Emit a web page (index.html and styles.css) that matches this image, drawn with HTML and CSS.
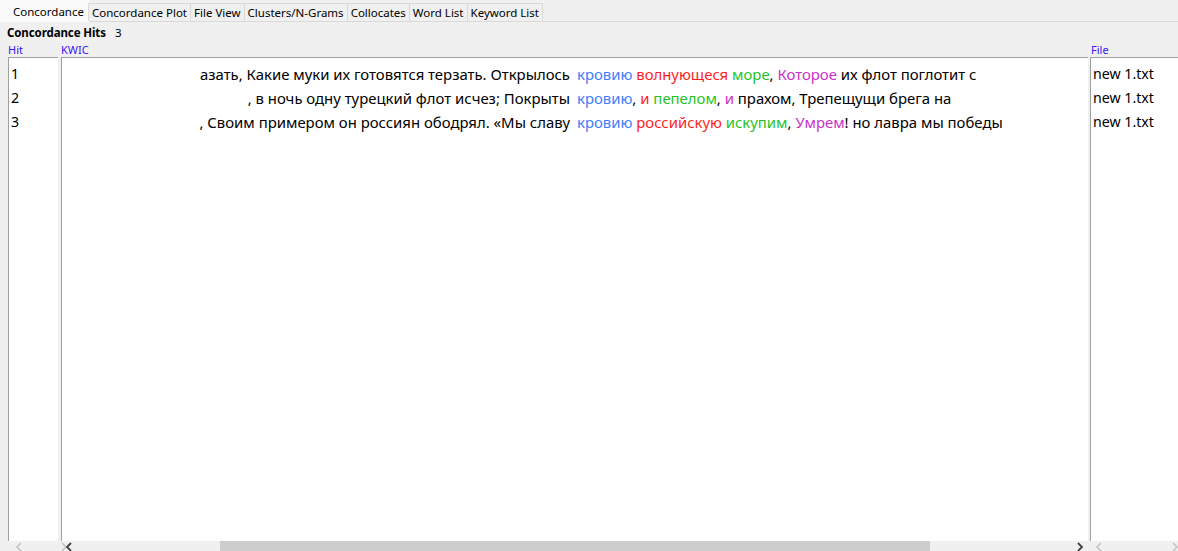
FILE: index.html
```html
<!DOCTYPE html>
<html>
<head>
<meta charset="utf-8">
<link rel="stylesheet" href="styles.css">
</head>
<body>
<div class="tabs">
  <div class="tab active">Concordance</div>
  <div class="tab">Concordance Plot</div>
  <div class="tab">File View</div>
  <div class="tab">Clusters/N-Grams</div>
  <div class="tab">Collocates</div>
  <div class="tab">Word List</div>
  <div class="tab">Keyword List</div>
</div>
<div class="hits"><b>Concordance Hits</b><span class="count">3</span></div>
<div class="grid">
  <div class="col col-hit">
    <div class="label">Hit</div>
    <div class="panel">
      <div class="row">1</div>
      <div class="row">2</div>
      <div class="row">3</div>
    </div>
    <div class="sbar">
      <svg class="arr dis" width="8" height="10" viewBox="0 0 8 10"><path d="M6 1 L2 5 L6 9" fill="none" stroke="currentColor" stroke-width="1.6"/></svg>
      <svg class="arr dis" width="8" height="10" viewBox="0 0 8 10"><path d="M2 1 L6 5 L2 9" fill="none" stroke="currentColor" stroke-width="1.6"/></svg>
    </div>
  </div>
  <div class="col col-kwic">
    <div class="label">KWIC</div>
    <div class="panel">
      <div class="krow"><span class="lc">азать, Какие муки их готовятся терзать. Открылось</span><span class="rc"><span class="b">кровию</span> <span class="r">волнующеся</span> <span class="g">море</span>, <span class="m">Которое</span> их флот поглотит с</span></div>
      <div class="krow"><span class="lc">, в ночь одну турецкий флот исчез; Покрыты</span><span class="rc"><span class="b">кровию</span>, <span class="r">и</span> <span class="g">пепелом</span>, <span class="m">и</span> прахом, Трепещущи брега на</span></div>
      <div class="krow"><span class="lc">, Своим примером он россиян ободрял. «Мы славу</span><span class="rc"><span class="b">кровию</span> <span class="r">российскую</span> <span class="g">искупим</span>, <span class="m">Умрем</span>! но лавра мы победы</span></div>
    </div>
    <div class="sbar kbar">
      <svg class="arr" width="8" height="10" viewBox="0 0 8 10"><path d="M6 1 L2 5 L6 9" fill="none" stroke="currentColor" stroke-width="1.8"/></svg>
      <div class="track"><div class="thumb"></div></div>
      <svg class="arr" width="8" height="10" viewBox="0 0 8 10"><path d="M2 1 L6 5 L2 9" fill="none" stroke="currentColor" stroke-width="1.8"/></svg>
    </div>
  </div>
  <div class="col col-file">
    <div class="label">File</div>
    <div class="panel">
      <div class="row">new 1.txt</div>
      <div class="row">new 1.txt</div>
      <div class="row">new 1.txt</div>
    </div>
    <div class="sbar">
      <svg class="arr dis" width="8" height="10" viewBox="0 0 8 10"><path d="M6 1 L2 5 L6 9" fill="none" stroke="currentColor" stroke-width="1.6"/></svg>
      <svg class="arr dis" width="8" height="10" viewBox="0 0 8 10"><path d="M2 1 L6 5 L2 9" fill="none" stroke="currentColor" stroke-width="1.6"/></svg>
    </div>
  </div>
</div>
</body>
</html>
```
FILE: styles.css
```css
html, body {
  margin: 0;
  padding: 0;
}
body {
  width: 1178px;
  height: 551px;
  overflow: hidden;
  background: #f0f0f0;
  font-family: "Noto Sans", "Open Sans", sans-serif;
  color: #000;
}
.tabs {
  display: flex;
  border-bottom: 1px solid #d9d9d9;
  align-items: flex-end;
  box-sizing: border-box;
  height: 22px;
}
.tab {
  font-size: 11.5px;
  height: 18px;
  line-height: 17px;
  padding: 0 3px;
  border: 1px solid #d9d9d9;
  border-bottom: none;
  margin-left: -1px;
  box-sizing: border-box;
  background: #f0f0f0;
}
.tab.active {
  height: 22px;
  line-height: 22px;
  background: #fafafa;
  margin-left: 0;
  margin-bottom: -1px;
  padding: 0 6px 0 12px;
  border-color: #fafafa;
  width: 89px;
}
.hits {
  height: 19px;
  padding: 2px 0 0 7px;
  font-size: 11.5px;
  line-height: 17px;
  box-sizing: border-box;
  letter-spacing: -0.1px;
}
.hits .count {
  margin-left: 9px;
}
.grid {
  display: grid;
  grid-template-columns: 50px 1027px 90px;
  column-gap: 3px;
  padding-left: 8px;
}
.col-file {
  margin-left: -1px;
}
.label {
  font-size: 11px;
  color: #3b14f5;
  height: 16px;
  line-height: 17px;
}
.col-kwic .label {
  padding-left: 0;
}
.col-file .label {
  padding-left: 1px;
}
.panel {
  height: 484px;
  background: #fff;
  border-left: 1px solid #a0a0a0;
  border-top: 1px solid #a0a0a0;
  box-sizing: border-box;
  padding-top: 4px;
  font-size: 14.2px;
  overflow: hidden;
}
.col-kwic .panel {
  font-size: 14.9px;
}
.row {
  height: 24px;
  line-height: 24px;
  padding-left: 2px;
  white-space: nowrap;
}
.krow {
  height: 24px;
  line-height: 24px;
  display: grid;
  grid-template-columns: 508px 1fr;
  column-gap: 7px;
  white-space: nowrap;
}
.lc {
  display: flex;
  justify-content: flex-end;
  overflow: hidden;
}
.rc {
  overflow: hidden;
}
.b { color: #3f7dfc; }
.r { color: #fc1e1e; }
.g { color: #1fc41f; }
.m { color: #c932c9; }
.sbar {
  height: 10px;
  display: flex;
  justify-content: space-between;
  align-items: flex-start;
  color: #bfbfbf;
  padding: 1px 4px 0 5px;
}
.col-hit .sbar {
  width: 60px;
  padding: 1px 0 0 7px;
  box-sizing: border-box;
}
.col-file .sbar {
  padding: 1px 2px 0 5px;
}
.arr.dis { color: #c4c4c4; }
.kbar {
  color: #404040;
  padding: 1px 4px 0 4px;
  gap: 3px;
}
.track {
  flex: 1;
  height: 10px;
  margin-top: -1px;
}
.thumb {
  margin-left: 144px;
  width: 710px;
  height: 10px;
  background: #cdcdcd;
}
```
